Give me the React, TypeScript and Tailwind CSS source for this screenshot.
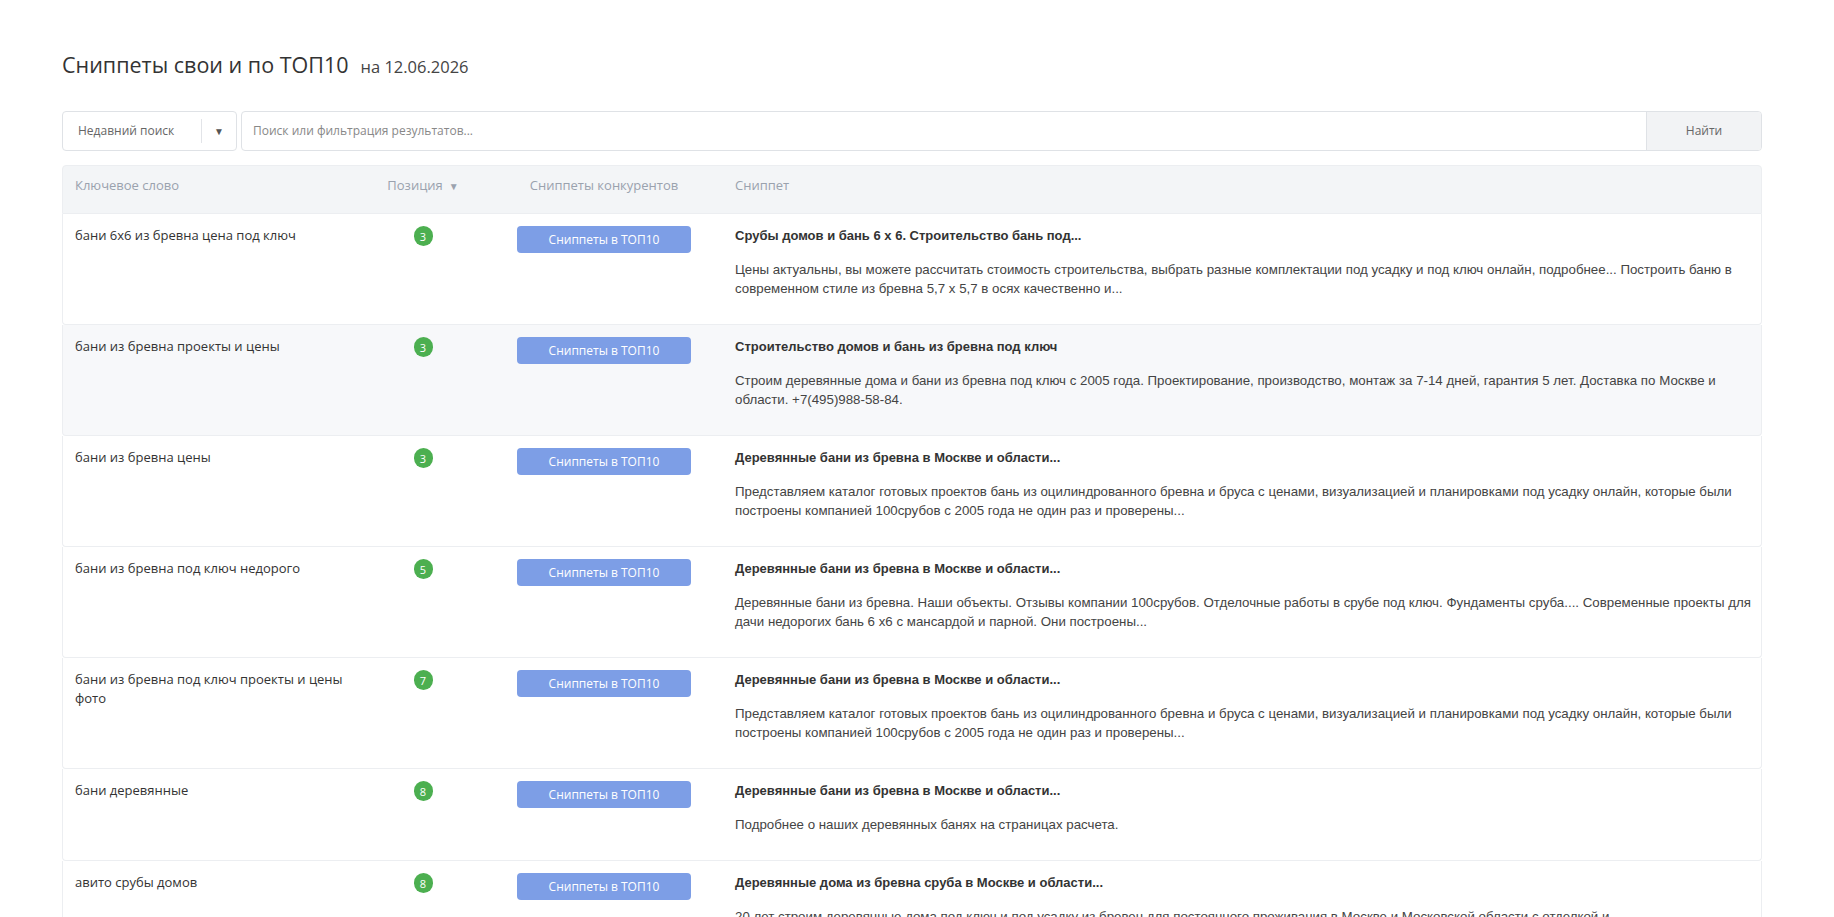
type Row = {
  keyword: string;
  position: number;
  title: string;
  text: string;
};

const rows: Row[] = [
  {
    keyword: "бани 6х6 из бревна цена под ключ",
    position: 3,
    title: "Срубы домов и бань 6 х 6. Строительство бань под...",
    text: "Цены актуальны, вы можете рассчитать стоимость строительства, выбрать разные комплектации под усадку и под ключ онлайн, подробнее... Построить баню в современном стиле из бревна 5,7 х 5,7 в осях качественно и...",
  },
  {
    keyword: "бани из бревна проекты и цены",
    position: 3,
    title: "Строительство домов и бань из бревна под ключ",
    text: "Строим деревянные дома и бани из бревна под ключ с 2005 года. Проектирование, производство, монтаж за 7-14 дней, гарантия 5 лет. Доставка по Москве и области. +7(495)988-58-84.",
  },
  {
    keyword: "бани из бревна цены",
    position: 3,
    title: "Деревянные бани из бревна в Москве и области...",
    text: "Представляем каталог готовых проектов бань из оцилиндрованного бревна и бруса с ценами, визуализацией и планировками под усадку онлайн, которые были построены компанией 100срубов с 2005 года не один раз и проверены...",
  },
  {
    keyword: "бани из бревна под ключ недорого",
    position: 5,
    title: "Деревянные бани из бревна в Москве и области...",
    text: "Деревянные бани из бревна. Наши объекты. Отзывы компании 100срубов. Отделочные работы в срубе под ключ. Фундаменты сруба.... Современные проекты для дачи недорогих бань 6 х6 с мансардой и парной. Они построены...",
  },
  {
    keyword: "бани из бревна под ключ проекты и цены фото",
    position: 7,
    title: "Деревянные бани из бревна в Москве и области...",
    text: "Представляем каталог готовых проектов бань из оцилиндрованного бревна и бруса с ценами, визуализацией и планировками под усадку онлайн, которые были построены компанией 100срубов с 2005 года не один раз и проверены...",
  },
  {
    keyword: "бани деревянные",
    position: 8,
    title: "Деревянные бани из бревна в Москве и области...",
    text: "Подробнее о наших деревянных банях на страницах расчета.",
  },
  {
    keyword: "авито срубы домов",
    position: 8,
    title: "Деревянные дома из бревна сруба в Москве и области...",
    text: "20 лет строим деревянные дома под ключ и под усадку из бревен для постоянного проживания в Москве и Московской области с отделкой и...",
  },
];

const cols = "grid grid-cols-[290px_140px_222px_1fr]";

export default function App() {
  return (
    <div className="min-h-screen bg-white pt-[49px] pr-[72px] pl-[62px] font-['Open_Sans',sans-serif] text-[#333]">
      <div className="flex items-baseline gap-[12px]">
        <h1 className="text-[21.5px] leading-[32px] font-normal text-[#333]">Сниппеты свои и по ТОП10</h1>
        <span className="text-[16.5px] text-[#444]">на 12.06.2026</span>
      </div>

      <div className="mt-[30px] flex h-[40px] gap-[4px]">
        <div className="flex w-[175px] items-center rounded-[4px] border border-[#dfe2e6] bg-white">
          <span className="flex-1 pl-[15px] text-[12px] text-[#666]">Недавний поиск</span>
          <span className="h-[24px] w-px bg-[#e2e4e8]" />
          <span className="flex w-[34px] items-center justify-center text-[10px] text-[#555]">▼</span>
        </div>
        <div className="flex flex-1 overflow-hidden rounded-[4px] border border-[#dfe2e6]">
          <input
            className="flex-1 px-[11px] text-[12px] text-[#333] outline-none placeholder:text-[#888]"
            placeholder="Поиск или фильтрация результатов..."
          />
          <button className="w-[115px] border-l border-[#dfe2e6] bg-[#f2f3f5] text-[12px] text-[#666]">
            Найти
          </button>
        </div>
      </div>

      <div className="mt-[14px]">
        <div className={`${cols} h-[49px] items-center rounded-t-[4px] border border-[#eceef1] bg-[#f3f5f7] pb-[7px] text-[13px] text-[#9aa2ae]`}>
          <div className="pl-[12px]">Ключевое слово</div>
          <div className="flex items-center justify-center gap-[6px]">
            Позиция <span className="text-[10px]">▼</span>
          </div>
          <div className="text-center">Сниппеты конкурентов</div>
          <div className="pl-[20px]">Сниппет</div>
        </div>

        {rows.map((row, i) => (
          <div
            key={i}
            className={`${cols} rounded-b-[4px] border-x border-b border-[#eceef1] pt-[12px] pb-[26px] ${
              i === 1 ? "bg-[#f7f8fa]" : "bg-white"
            }`}
          >
            <div className="pr-[4px] pl-[12px] text-[13px] leading-[19px] text-[#333]">{row.keyword}</div>
            <div className="flex justify-center">
              <span className="flex h-[20px] w-[19px] items-center justify-center rounded-full bg-[#4caf50] text-[11px] leading-none text-white">
                {row.position}
              </span>
            </div>
            <div className="flex justify-center">
              <button className="h-[27px] w-[174px] rounded-[4px] bg-[#7d9ee6] text-[12px] text-white">
                Сниппеты в ТОП10
              </button>
            </div>
            <div className="pr-[8px] pl-[20px] font-['Liberation_Sans',Arial,sans-serif]">
              <div className="text-[13px] leading-[19px] font-bold text-[#333]">{row.title}</div>
              <div className="mt-[15px] text-[13.3px] leading-[19px] text-[#444]">{row.text}</div>
            </div>
          </div>
        ))}
      </div>
    </div>
  );
}
